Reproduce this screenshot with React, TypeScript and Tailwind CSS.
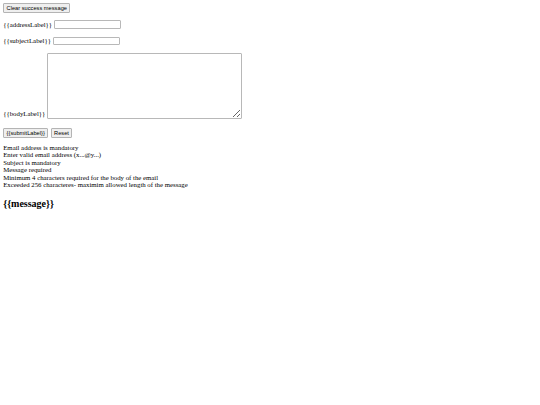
export default function App() {
  const errors = [
    'Email address is mandatory',
    'Enter valid email address (x...@y...)',
    'Subject is mandatory',
    'Message required',
    'Minimum 4 characters required for the body of the email',
    'Exceeded 256 characteres- maximim allowed length of the message',
  ]

  const btn =
    "rounded-[1px] border border-[#b4b4b4] bg-[#efefef] px-[2.4px] py-[0.8px] font-['Liberation_Sans',Arial,sans-serif] text-[5.7px] leading-[6.2px] text-black"

  return (
    <div className="min-h-screen bg-white p-[3.2px] font-['Liberation_Serif','Times_New_Roman',serif] text-[6.8px] leading-[7.5px] text-black">
      <button type="button" className={btn}>
        Clear success message
      </button>

      <form className="mt-[7.2px] mb-[4.4px]">
        <div className="flex items-center gap-[2px]">
          <label>{'{{addressLabel}}'}</label>
          <input className="h-[8.6px] w-[67px] rounded-[1px] border border-[#b8b8b8] bg-white" />
        </div>

        <div className="mt-[7.8px] flex items-center gap-[2px]">
          <label>{'{{subjectLabel}}'}</label>
          <input className="h-[8.6px] w-[67px] rounded-[1px] border border-[#b8b8b8] bg-white" />
        </div>

        <div className="mt-[7.8px] flex items-end gap-[2px]">
          <label className="pb-px">{'{{bodyLabel}}'}</label>
          <textarea className="h-[65.6px] w-[195px] resize rounded-[1px] border border-[#b8b8b8] bg-white" />
        </div>

        <div className="mt-[9.8px] flex gap-[2.4px]">
          <button type="submit" className={btn}>
            {'{{submitLabel}}'}
          </button>
          <button type="reset" className={btn}>
            Reset
          </button>
        </div>
      </form>

      <div className="pt-[1.4px]">
        {errors.map((e) => (
          <div key={e}>{e}</div>
        ))}
      </div>

      <h2 className="mt-[9px] text-[10px] leading-[11px] font-bold">{'{{message}}'}</h2>
    </div>
  )
}
